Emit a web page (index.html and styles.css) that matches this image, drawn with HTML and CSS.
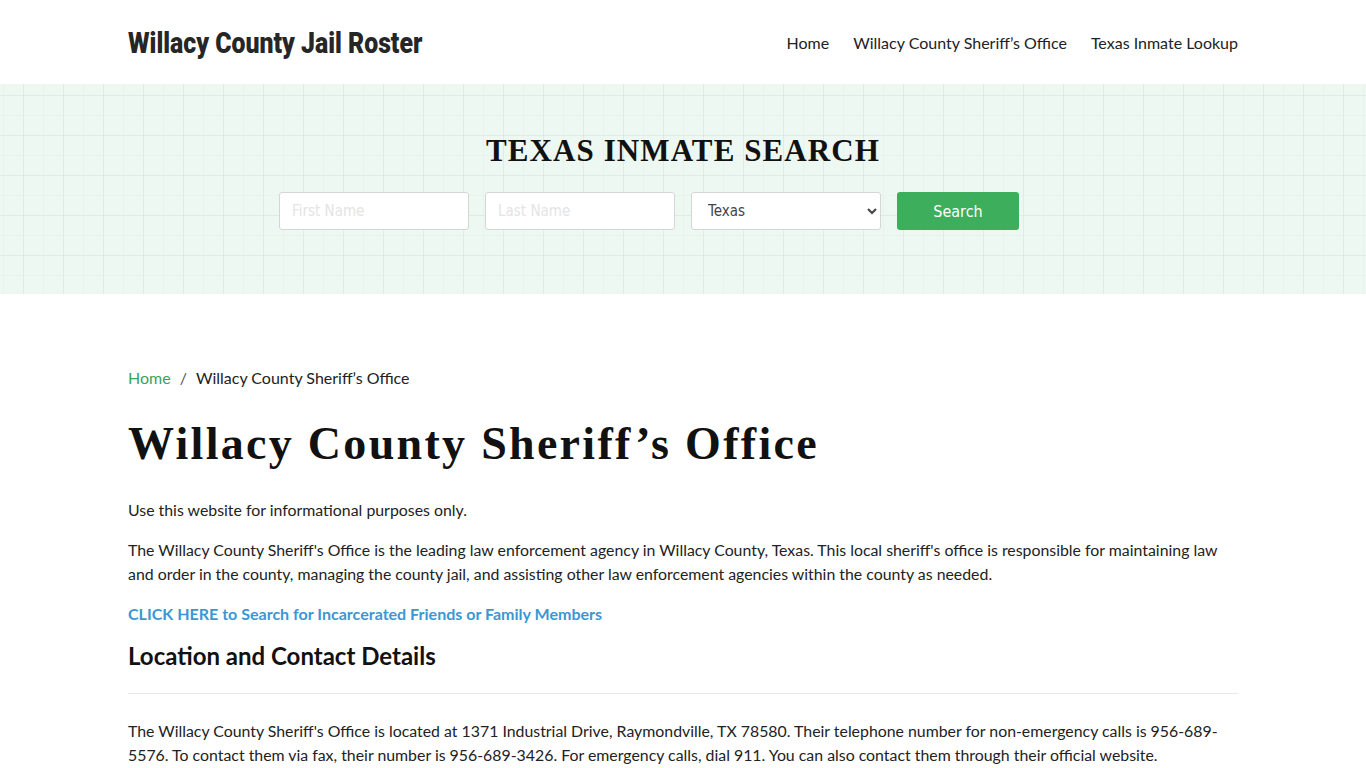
FILE: index.html
```html
<!DOCTYPE html>
<html lang="en">
<head>
    <meta charset="UTF-8">
    <meta name="viewport" content="width=device-width, initial-scale=1.0">
    <title>Willacy County Sheriff's Office</title>
    <link rel="stylesheet" href="styles.css">
</head>
<body>
    <header class="site-header">
        <div class="container header-row">
            <a class="logo" href="#">Willacy County Jail Roster</a>
            <nav>
                <ul class="main-nav">
                    <li><a href="#">Home</a></li>
                    <li><a href="#">Willacy County Sheriff’s Office</a></li>
                    <li><a href="#">Texas Inmate Lookup</a></li>
                </ul>
            </nav>
        </div>
    </header>

    <section class="search-banner">
        <h2 class="banner-title">TEXAS INMATE SEARCH</h2>
        <form class="search-form">
            <input type="text" placeholder="First Name">
            <input type="text" placeholder="Last Name">
            <select>
                <option>Texas</option>
            </select>
            <button type="button">Search</button>
        </form>
    </section>

    <main class="container content">
        <ol class="breadcrumb">
            <li><a href="#">Home</a></li>
            <li>Willacy County Sheriff’s Office</li>
        </ol>

        <h1 class="page-title">Willacy County Sheriff’s Office</h1>

        <p>Use this website for informational purposes only.</p>
        <p>The Willacy County Sheriff's Office is the leading law enforcement agency in Willacy County, Texas. This local sheriff's office is responsible for maintaining law and order in the county, managing the county jail, and assisting other law enforcement agencies within the county as needed.</p>
        <p class="cta-line"><a class="cta" href="#">CLICK HERE to Search for Incarcerated Friends or Family Members</a></p>

        <h2 class="section-title">Location and Contact Details</h2>
        <hr>
        <p>The Willacy County Sheriff's Office is located at 1371 Industrial Drive, Raymondville, TX 78580. Their telephone number for non-emergency calls is 956-689-5576. To contact them via fax, their number is 956-689-3426. For emergency calls, dial 911. You can also contact them through their official website.</p>
    </main>
</body>
</html>
```

FILE: styles.css
```css
body {
    margin: 0;
    font-family: Lato, "Open Sans", sans-serif;
    font-size: 15.86px;
    line-height: 24px;
    color: #222;
    background: #fff;
}

a {
    text-decoration: none;
}

.container {
    width: 1110px;
    margin: 0 auto;
}

/* header */

.site-header {
    height: 84px;
    background: #fff;
}

.header-row {
    height: 84px;
    display: flex;
    align-items: center;
    justify-content: space-between;
}

.logo {
    display: inline-block;
    font-family: Roboto, "DejaVu Sans", sans-serif;
    font-weight: 900;
    font-size: 29px;
    color: #262626;
    transform: scaleX(0.856);
    transform-origin: left center;
    margin-top: 2px;
}

.main-nav {
    list-style: none;
    margin: 2px 0 0;
    padding: 0;
    display: flex;
    gap: 24px;
}

.main-nav a {
    color: #222;
    font-size: 16px;
}

/* search banner */

.search-banner {
    height: 210px;
    box-sizing: border-box;
    padding-top: 47px;
    background-color: #ecf8f1;
    background-image:
        linear-gradient(90deg, rgba(205, 228, 214, 0.4) 1px, transparent 1px),
        linear-gradient(0deg, rgba(205, 228, 214, 0.4) 1px, transparent 1px),
        linear-gradient(90deg, rgba(225, 240, 230, 0.45) 1px, transparent 1px),
        linear-gradient(0deg, rgba(225, 240, 230, 0.45) 1px, transparent 1px);
    background-size: 40px 40px, 40px 40px, 20px 20px, 20px 20px;
    background-position: 23px 0, 0 12px, 23px 0, 0 12px;
}

.banner-title {
    margin: 0;
    text-align: center;
    font-family: "Liberation Serif", serif;
    font-weight: bold;
    font-size: 31px;
    line-height: 40px;
    letter-spacing: 1.1px;
    color: #111;
}

.search-form {
    display: flex;
    gap: 16px;
    margin: 21px 0 0 279px;
}

.search-form input,
.search-form select {
    width: 190px;
    height: 38px;
    box-sizing: border-box;
    border: 1px solid #d6d6d6;
    border-radius: 3px;
    background: #fff;
    padding: 0 12px;
    font-family: "DejaVu Sans", sans-serif;
    font-stretch: condensed;
    font-size: 15px;
    color: #444;
}

.search-form input::placeholder {
    color: #e4e4e4;
}

.search-form select {
    padding-left: 12px;
}

.search-form button {
    width: 122px;
    height: 38px;
    border: none;
    border-radius: 3px;
    background: #3cae5c;
    color: #fff;
    font-family: "DejaVu Sans", sans-serif;
    font-stretch: condensed;
    font-size: 16px;
    cursor: pointer;
}

/* content */

.content {
    padding-top: 72px;
}

.breadcrumb {
    list-style: none;
    margin: 0;
    padding: 0;
    display: flex;
    font-size: 16px;
}

.breadcrumb li + li::before {
    content: "/";
    padding: 0 9px 0 9px;
    color: #555;
}

.breadcrumb a {
    color: #3aa35a;
}

.page-title {
    margin: 27px 0 27px;
    font-family: "Liberation Serif", serif;
    font-weight: bold;
    font-size: 46px;
    line-height: 54px;
    letter-spacing: 2.3px;
    color: #111;
}

.content p {
    margin: 0 0 16px;
}

.content p.cta-line {
    margin-bottom: 12px;
}

.cta {
    color: #3b97d3;
    font-weight: bold;
    font-size: 16.05px;
}

.section-title {
    margin: 0;
    font-size: 24px;
    line-height: 36px;
    font-weight: bold;
    color: #111;
}

.content hr {
    border: none;
    border-top: 1px solid #e8e8e8;
    margin: 19px 0 25px;
}
```
